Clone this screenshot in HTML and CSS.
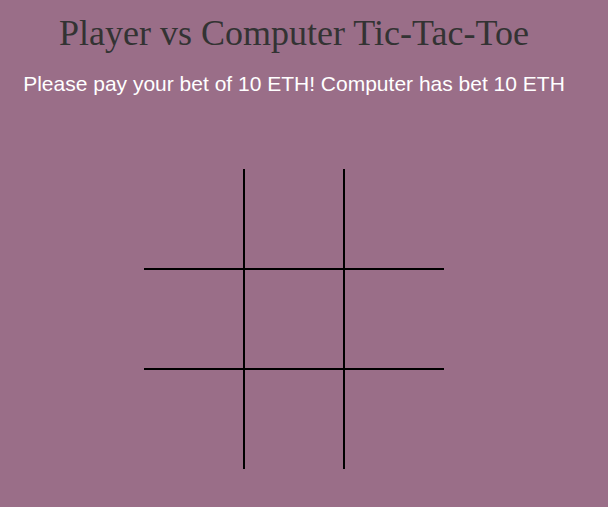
FILE: index.html
```html
<!DOCTYPE html>
<html>
<head>
<meta charset="utf-8">
<link rel="stylesheet" href="styles.css">
</head>
<body>
<main class="app">
  <h1 class="title">Player vs Computer Tic-Tac-Toe</h1>
  <p class="status">Please pay your bet of 10 ETH! Computer has bet 10 ETH</p>
  <div class="board">
    <div class="cell c-r c-b"></div>
    <div class="cell c-r c-b"></div>
    <div class="cell c-b"></div>
    <div class="cell c-r c-b"></div>
    <div class="cell c-r c-b"></div>
    <div class="cell c-b"></div>
    <div class="cell c-r"></div>
    <div class="cell c-r"></div>
    <div class="cell"></div>
  </div>
</main>
</body>
</html>
```

FILE: styles.css
```css
html, body {
  margin: 0;
  padding: 0;
  background: #9a6e88;
  height: 100%;
}
.app {
  width: 588px;
  display: flex;
  flex-direction: column;
  align-items: center;
}
.title {
  margin: 12px 0 0;
  font-family: "Liberation Serif", serif;
  font-weight: normal;
  font-size: 36px;
  line-height: 42px;
  color: #333333;
}
.status {
  margin: 18px 0 0;
  font-family: "Liberation Sans", Arial, sans-serif;
  font-size: 21px;
  line-height: 24px;
  color: #ffffff;
}
.board {
  margin-top: 73px;
  display: grid;
  grid-template-columns: 101px 100px 99px;
  grid-template-rows: 101px 100px 99px;
}
.cell {
  box-sizing: border-box;
}
.c-r { border-right: 2px solid #000; }
.c-b { border-bottom: 2px solid #000; }
```
